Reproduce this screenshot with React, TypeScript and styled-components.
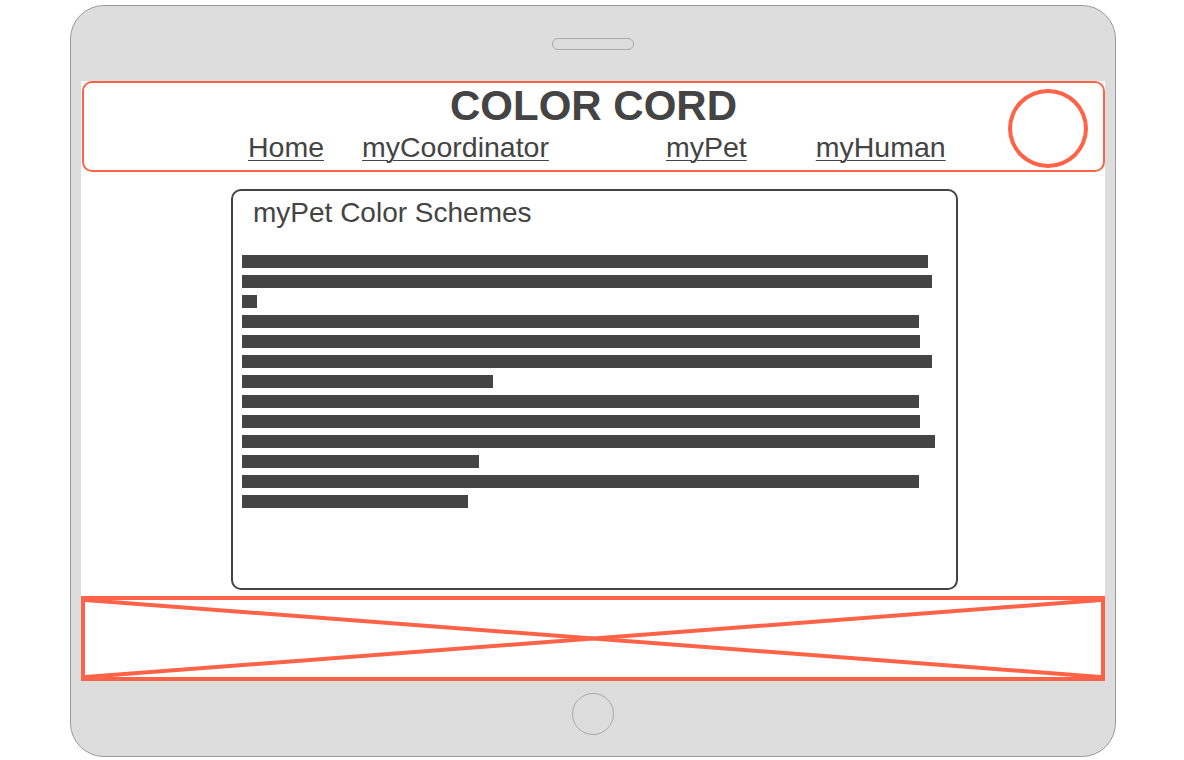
import React from "react";
import styled, { createGlobalStyle } from "styled-components";

const ORANGE = "#ff6347";
const INK = "#444444";

const GlobalStyle = createGlobalStyle`
  html, body { margin: 0; padding: 0; background: #ffffff; }
  body { font-family: "Liberation Sans", Arial, Helvetica, sans-serif; }
  * { box-sizing: border-box; }
`;

const Page = styled.div`
  width: 1184px;
  height: 760px;
  padding: 5px 0 0 70px;
`;

const Device = styled.div`
  width: 1046px;
  height: 752px;
  background: #dddddd;
  border: 1px solid #9a9a9a;
  border-radius: 34px;
  display: flex;
  flex-direction: column;
  align-items: center;
`;

const TopBezel = styled.div`
  height: 75px;
  width: 100%;
  display: flex;
  align-items: center;
  justify-content: center;
`;

const Speaker = styled.div`
  width: 82px;
  height: 12px;
  border: 1px solid #aaaaaa;
  border-radius: 6px;
`;

const Screen = styled.div`
  width: 1024px;
  height: 600px;
  background: #ffffff;
  display: flex;
  flex-direction: column;
`;

const Header = styled.header`
  position: relative;
  margin-left: 1px;
  width: 1023px;
  height: 91px;
  border: 2px solid ${ORANGE};
  border-radius: 10px;
  padding-top: 2px;
  display: flex;
  flex-direction: column;
  align-items: center;
`;

const Title = styled.h1`
  margin: 0;
  font-size: 42px;
  line-height: 42px;
  font-weight: bold;
  color: ${INK};
`;

const Nav = styled.nav`
  align-self: stretch;
  display: flex;
  margin-top: 6px;
  padding-left: 164px;
`;

const NavLink = styled.a<{ $offset: number }>`
  margin-left: ${(p) => p.$offset}px;
  font-size: 28.5px;
  line-height: 28px;
  color: ${INK};
  text-decoration: underline;
  text-decoration-thickness: 1px;
  text-underline-offset: 3px;
`;

const Avatar = styled.div`
  position: absolute;
  top: 6px;
  right: 15px;
  width: 80px;
  height: 79px;
  border: 4px solid ${ORANGE};
  border-radius: 50%;
`;

const Main = styled.main`
  flex: 1;
  padding: 17px 0 0 150px;
`;

const Panel = styled.section`
  width: 727px;
  height: 401px;
  border: 2px solid ${INK};
  border-radius: 10px;
  padding: 8px 0 0 0;
`;

const PanelTitle = styled.h2`
  margin: 0 0 28px 20px;
  font-size: 28px;
  line-height: 28px;
  font-weight: normal;
  color: ${INK};
`;

const Lines = styled.div`
  display: flex;
  flex-direction: column;
  gap: 7px;
  padding-left: 9px;
`;

const Line = styled.div`
  height: 13px;
  background: ${INK};
`;

const Footer = styled.footer`
  height: 85px;
  border: 4px solid ${ORANGE};
  display: flex;
`;

const Cross = styled.svg`
  display: block;
  width: 100%;
  height: 100%;
`;

const BottomBezel = styled.div`
  flex: 1;
  width: 100%;
  display: flex;
  justify-content: center;
  padding-top: 12px;
`;

const HomeButton = styled.div`
  width: 42px;
  height: 42px;
  border: 1px solid #aaaaaa;
  border-radius: 50%;
`;

const navItems: { label: string; offset: number }[] = [
  { label: "Home", offset: 0 },
  { label: "myCoordinator", offset: 38 },
  { label: "myPet", offset: 117 },
  { label: "myHuman", offset: 69 },
];

const lineWidths = [686, 690, 15, 677, 678, 690, 251, 677, 678, 693, 237, 677, 226];

export default function App() {
  return (
    <>
      <GlobalStyle />
      <Page>
        <Device>
          <TopBezel>
            <Speaker />
          </TopBezel>
          <Screen>
            <Header>
              <Title>COLOR CORD</Title>
              <Nav>
                {navItems.map((n) => (
                  <NavLink key={n.label} href="#" $offset={n.offset}>
                    {n.label}
                  </NavLink>
                ))}
              </Nav>
              <Avatar />
            </Header>
            <Main>
              <Panel>
                <PanelTitle>myPet Color Schemes</PanelTitle>
                <Lines>
                  {lineWidths.map((w, i) => (
                    <Line key={i} style={{ width: w }} />
                  ))}
                </Lines>
              </Panel>
            </Main>
            <Footer>
              <Cross viewBox="0 0 100 100" preserveAspectRatio="none">
                <line x1="0" y1="0" x2="100" y2="100" stroke={ORANGE} strokeWidth="4" vectorEffect="non-scaling-stroke" />
                <line x1="0" y1="100" x2="100" y2="0" stroke={ORANGE} strokeWidth="4" vectorEffect="non-scaling-stroke" />
              </Cross>
            </Footer>
          </Screen>
          <BottomBezel>
            <HomeButton />
          </BottomBezel>
        </Device>
      </Page>
    </>
  );
}
